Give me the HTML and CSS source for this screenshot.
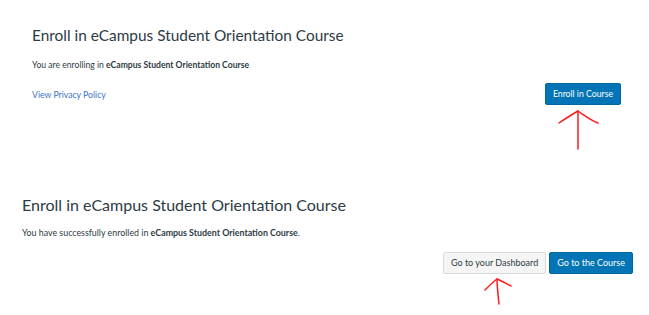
FILE: index.html
```html
<!DOCTYPE html>
<html>
<head>
<meta charset="utf-8">
<link rel="stylesheet" href="styles.css">
</head>
<body>
<div class="page">
  <section class="panel panel-top">
    <h1 class="title">Enroll in eCampus Student Orientation Course</h1>
    <p class="msg">You are enrolling in <strong>eCampus Student Orientation Course</strong></p>
    <div class="row">
      <a class="link" href="#">View Privacy Policy</a>
      <button class="btn btn-primary">Enroll in Course</button>
    </div>
  </section>
  <section class="panel panel-bottom">
    <h1 class="title title-lg">Enroll in eCampus Student Orientation Course</h1>
    <p class="msg msg-lg">You have successfully enrolled in <strong>eCampus Student Orientation Course</strong>.</p>
    <div class="row row-end">
      <button class="btn btn-default">Go to your Dashboard</button>
      <button class="btn btn-primary btn-lg">Go to the Course</button>
    </div>
  </section>
  <svg class="arrow arrow-1" width="50" height="45" viewBox="0 0 50 45">
    <path d="M25 3 L25 41" />
    <path d="M6 15 C12 11 18 7 25 3 C31 7 37 12 45 15" />
  </svg>
  <svg class="arrow arrow-2" width="40" height="32" viewBox="0 0 40 32">
    <path d="M16 3 C16 10 17 19 18 28" />
    <path d="M4 14 C8 10 12 6 16 3 C21 5 26 8 30 10" />
  </svg>
</div>
</body>
</html>
```
FILE: styles.css
```css
html, body {
  margin: 0;
  padding: 0;
  background: #ffffff;
}
body {
  font-family: Lato, "Open Sans", sans-serif;
  color: #2d3b45;
}
.page {
  position: relative;
  width: 649px;
  height: 315px;
  overflow: hidden;
}
.panel {
  display: flex;
  flex-direction: column;
}
.panel-top {
  padding: 25px 28px 0 32px;
}
.panel-bottom {
  padding: 90px 16px 0 22px;
}
.title {
  margin: 0;
  font-size: 15.4px;
  font-weight: 400;
  line-height: 20px;
  color: #2d3b45;
}
.title-lg {
  font-size: 16px;
}
.msg {
  margin: 14px 0 0;
  font-size: 8.6px;
  line-height: 12px;
  color: #2d3b45;
}
.msg-lg {
  margin-top: 12px;
  font-size: 8.85px;
}
.msg strong {
  font-weight: 700;
}
.row {
  display: flex;
  align-items: center;
  justify-content: space-between;
  margin-top: 12px;
}
.row-end {
  justify-content: flex-end;
  gap: 3px;
  margin-top: 13px;
}
.link {
  font-size: 8.7px;
  color: #3b73c8;
  text-decoration: none;
}
.btn {
  font-family: Lato, "Open Sans", sans-serif;
  font-size: 8.7px;
  line-height: 12px;
  border-radius: 2px;
  padding: 4px 7px;
  cursor: pointer;
}
.btn-primary {
  background: #0374b5;
  color: #ffffff;
  border: 1px solid #0368a2;
}
.btn-lg {
  font-size: 9px;
  padding: 4px 7px;
}
.btn-default {
  background: #f5f5f5;
  color: #2d3b45;
  border: 1px solid #d5dadd;
  font-size: 9px;
  padding: 4px 7px;
}
.arrow {
  position: absolute;
  fill: none;
  stroke: #ff1a1a;
  stroke-width: 1.5;
  stroke-linecap: round;
}
.arrow-1 {
  left: 553px;
  top: 108px;
}
.arrow-2 {
  left: 481px;
  top: 276px;
}
```
